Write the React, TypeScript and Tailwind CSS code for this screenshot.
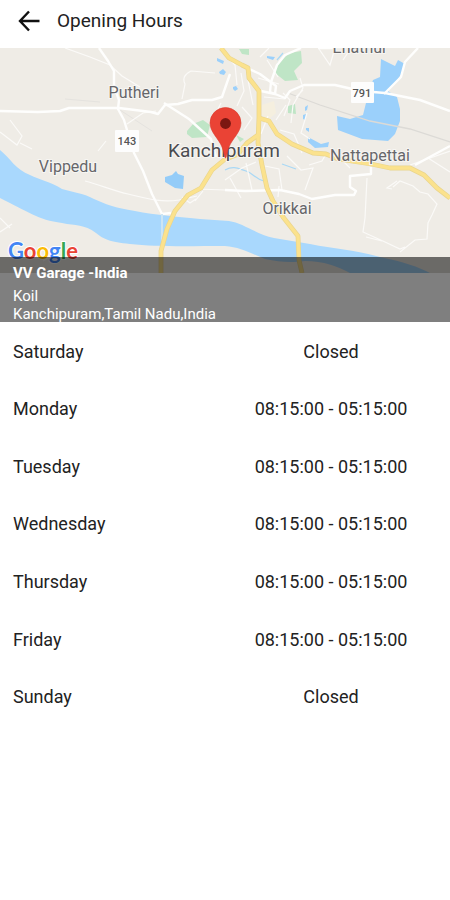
import React from "react";

type Opening = { day: string; hours: string };

const openings: Opening[] = [
  { day: "Saturday", hours: "Closed" },
  { day: "Monday", hours: "08:15:00 - 05:15:00" },
  { day: "Tuesday", hours: "08:15:00 - 05:15:00" },
  { day: "Wednesday", hours: "08:15:00 - 05:15:00" },
  { day: "Thursday", hours: "08:15:00 - 05:15:00" },
  { day: "Friday", hours: "08:15:00 - 05:15:00" },
  { day: "Sunday", hours: "Closed" },
];

function GarageMap() {
  return (
    <svg
      className="block h-[225px] w-full"
      viewBox="0 48 450 225"
      preserveAspectRatio="xMidYMid slice"
      role="img"
      aria-label="Map of Kanchipuram"
    >
      <rect x="0" y="48" width="450" height="225" fill="#efece6" />

      {/* parks */}
      <g fill="#bfe5c6">
        <path d="M277 63L290 53L301 51L302 63L294 71L298 80L285 81L275 73Z" />
        <path d="M187 131L193 124L203 120L210 125L207 137L192 138L187 134Z" />
        <path d="M288 106L295 104L296 114L288 113Z" />
        <path d="M239 49L249 49L249 55L242 54Z" />
        <path d="M236 135L244 139L240 142Z" />
      </g>
      <path d="M262 105L274 101L276 113L268 120L262 115Z" fill="#f5efdf" />

      {/* river and lakes */}
      <g fill="#a9d8fd">
        <path d="M0 150C10 158 16 170 30 175C40 180 51 182 62 189C72 192 83 193 94 199C105 204 115 208 135 211C155 215 181 217 200 219L229 221C243 223 256 234 274 238L310 244C335 249 356 250 380 257C405 262 418 267 430 273H350C337 266 324 261 305 261C290 263 280 262 265 259C250 253 240 247 225 246C190 246 155 247 130 244C110 242 103 239 96 233C84 224 76 226 62 223C38 220 27 211 0 198Z" />
      </g>
      <path d="M165 177L172 175L176 171L178 174L184 176L183 189L175 188L165 182Z" fill="#94ccf8" />
      <g fill="#9bd0fb">
        <path d="M381 59L395 66L398 60L405 64L402 73L395 83L388 91L397 97L400 109L400 121L395 134L388 141L362 139L338 130L337 116L350 119L363 115L367 99L373 80L380 77Z" />
        <path d="M308 137L321 144L329 142L328 147L315 148L308 142Z" />
        <path d="M217 58l7 3-1 3-6-3zM219 72l4-3 3 3-2 3-4-1zM233 87l3-1 2 3-3 2-2-2zM267 56l8 1-2 3-6-2z" />
        <path d="M305 107l3-2-1 5-2 1zM303 115l3-1-1 6-2-1zM306 128l3 0 0 4-3-2z" />
      </g>
      <g fill="none" stroke="#a9d8f5" strokeWidth="1.2">
        <path d="M225 170C234 165 239 169 246 171S255 179 264 181M282 164L296 169M283 53l-6 7" />
      </g>

      {/* railway */}
      <path d="M288 93L320 105L370 121L410 129L450 142" fill="none" stroke="#dcdad6" strokeWidth="1.3" />
      <path d="M65 99L100 102M120 110L152 131" fill="none" stroke="#e5e3df" strokeWidth="1" />

      {/* minor streets */}
      <g fill="none" stroke="#fbfaf8" strokeWidth="1.2">
        <path d="M65 48L90 57L110 65L122 76L140 87M182 99L185 84Q181 76 191 71L215 73M10 120L22 136L17 145L0 132M20 143L32 149M98 151L106 141M127 124L143 113L156 111" />
        <path d="M85 181C100 185 115 191 128 194C145 198 160 203 179 200L197 196M60 252l-17 9M0 218l10 10M0 232l12-8" />
        <path d="M241 73L244 91L237 106M248 80L253 105M258 78L279 84M264 97L285 99M286 105L276 120M300 78L303 88L293 105L291 123M319 49L330 65L335 48M303 90L296 97M307 113L301 133L310 139M343 60L351 48" />
        <path d="M226 56L235 65L237 85M260 57L269 48M267 60L278 77M283 93L290 100L284 116M268 116L261 134M242 107L252 118L244 130M280 130L294 134L302 153M225 180L242 168L256 162M246 163L252 190M265 166L279 169L282 190M287 156L301 170L313 168L305 190M309 165L322 161L326 154M335 153L350 168M450 151L410 165M450 172L428 158" />
        <path d="M367 178L366 198L365 218L363 232L385 242L400 249L405 247M366 237L382 241M393 187L400 181L413 186L420 192L428 194L437 204L432 215L428 223L427 239L415 240L400 252M397 181L387 188L392 189" />
        <path d="M197 189L225 190L246 191M182 197L190 203L196 199M203 191L195 201M230 178L241 198M279 186L278 197M221 103L213 119" />
      </g>

      {/* main roads */}
      <g fill="none" stroke="#fefefd" strokeWidth="2.4" strokeLinejoin="round">
        <path d="M99 48L108 61L114 71L114 86L119 100L118 109L124 120L127 130L134 153L143 171L152 194L162 214L171 213" />
        <path d="M0 111L38 112L60 111L69 108L119 108L151 112L158 114L165 105L178 104L192 100L212 100L222 97L230 74" />
        <path d="M164 103L189 119L211 139L216 157" />
        <path d="M301 48L285 55L277 65L271 82L270 92L285 98L290 91L304 85L335 85L361 91L385 93L420 100L450 111" />
        <path d="M418 48L405 62L401 77L389 89L384 94M247 68L260 74L276 86L275 94L261 91M335 48L318 48" />
        <path d="M225 190L245 191L280 190L299 194L312 199L335 195L354 195L356 191L350 187L350 176L371 174L371 167M450 146L415 165" />
      </g>
      <path d="M162 214V247" stroke="#cce5f4" strokeWidth="2" />

      {/* highways */}
      {[
        { stroke: "#ead58d", width: "4.8" },
        { stroke: "#fbe28d", width: "3.4" },
      ].map((line) => (
        <g key={line.width} fill="none" stroke={line.stroke} strokeWidth={line.width} strokeLinejoin="round">
          <path d="M221 48L229 58L242 65L248 68L249 78L259 91L259 117L258 143L262 165L267 188L273 201L283 217L298 236L299 260L302 273" />
          <path d="M259 118L269 121L277 134L292 144L313 153L326 154L338 159L371 164L390 168L410 168L424 175L437 188L450 198" />
          <path d="M258 135L247 143L238 154L224 160L212 170L201 188L188 195L175 211L167 229L161 251L161 273" />
        </g>
      ))}

      {/* road shields */}
      <rect x="115" y="130" width="24" height="22" rx="1" fill="#fdfdfd" />
      <rect x="351" y="82" width="23" height="21" rx="1" fill="#fdfdfd" />
      <g className="font-['Roboto',sans-serif]" textAnchor="middle" fill="#555555" fontSize="11" fontWeight="500">
        <text x="127" y="145">143</text>
        <text x="362" y="97">791</text>
      </g>

      {/* place names */}
      <g
        className="font-['Roboto',sans-serif]"
        textAnchor="middle"
        fill="#66666a"
        stroke="#f7f6f3"
        strokeWidth="2"
        paintOrder="stroke"
        fontSize="16"
      >
        <text x="134" y="98">Putheri</text>
        <text x="68" y="172">Vippedu</text>
        <text x="360" y="53">Enathur</text>
        <text x="370" y="161">Nattapettai</text>
        <text x="287" y="214">Orikkai</text>
        <text x="224" y="157" fontSize="19" fill="#4c4c50">Kanchipuram</text>
      </g>

      {/* location pin */}
      <path
        d="M225.5 158C224.500 158 224 152 222 147C219 139 210 132 210 123A15.5 15.500 0 0 1 241 123C241 132 232 139 229 147C227 152 226.500 158 225.500 158Z"
        fill="#ea4335"
        stroke="#d93a2e"
        strokeWidth="0.6"
      />
      <circle cx="225.5" cy="123.5" r="5.4" fill="#7b1712" />

      {/* map provider */}
      <text
        x="8"
        y="259"
        className="font-['Lato',sans-serif]"
        fontSize="22"
        fontWeight="700"
        stroke="#ffffff"
        strokeWidth="2"
        paintOrder="stroke"
      >
        <tspan fill="#4285f4">G</tspan>
        <tspan fill="#ea4335">o</tspan>
        <tspan fill="#fbbc05">o</tspan>
        <tspan fill="#4285f4">g</tspan>
        <tspan fill="#34a853">l</tspan>
        <tspan fill="#ea4335">e</tspan>
      </text>
      <rect x="0" y="257" width="450" height="16" fill="#000000" opacity="0.1" />
    </svg>
  );
}

export default function App() {
  return (
    <div className="min-h-screen bg-white font-['Roboto',sans-serif] text-[#222222]">
      <header className="flex h-12 items-center gap-4 px-[17px] pb-[7px]">
        <button type="button" aria-label="Back" className="block">
          <svg className="block h-6 w-6" viewBox="0 0 24 24" fill="none" stroke="#111111" strokeWidth="2.4">
            <path d="M22.5 12H4M12 2.5L3 12L12 21.5" />
          </svg>
        </button>
        <h1 className="text-[19px] leading-6">Opening Hours</h1>
      </header>

      <main>
        <section>
          <GarageMap />
          <div className="relative -mt-4 mb-px h-[65px] bg-black/50 px-[13px] pt-[7px] text-white">
            <h2 className="text-[15px] leading-[18px] font-bold">VV Garage -India</h2>
            <address className="pt-[5px] text-[15px] leading-[18px] not-italic">
              Koil
              <br />
              Kanchipuram,Tamil Nadu,India
            </address>
          </div>
        </section>

        <div className="px-[13px]">
          <table className="h-[403px] w-full table-fixed border-collapse text-[18px] leading-6">
            <tbody>
              {openings.map(({ day, hours }) => (
                <tr key={day}>
                  <th scope="row" className="p-0 text-left align-middle font-normal">
                    {day}
                  </th>
                  <td className="p-0 text-center align-middle">{hours}</td>
                </tr>
              ))}
            </tbody>
          </table>
        </div>
      </main>
    </div>
  );
}
